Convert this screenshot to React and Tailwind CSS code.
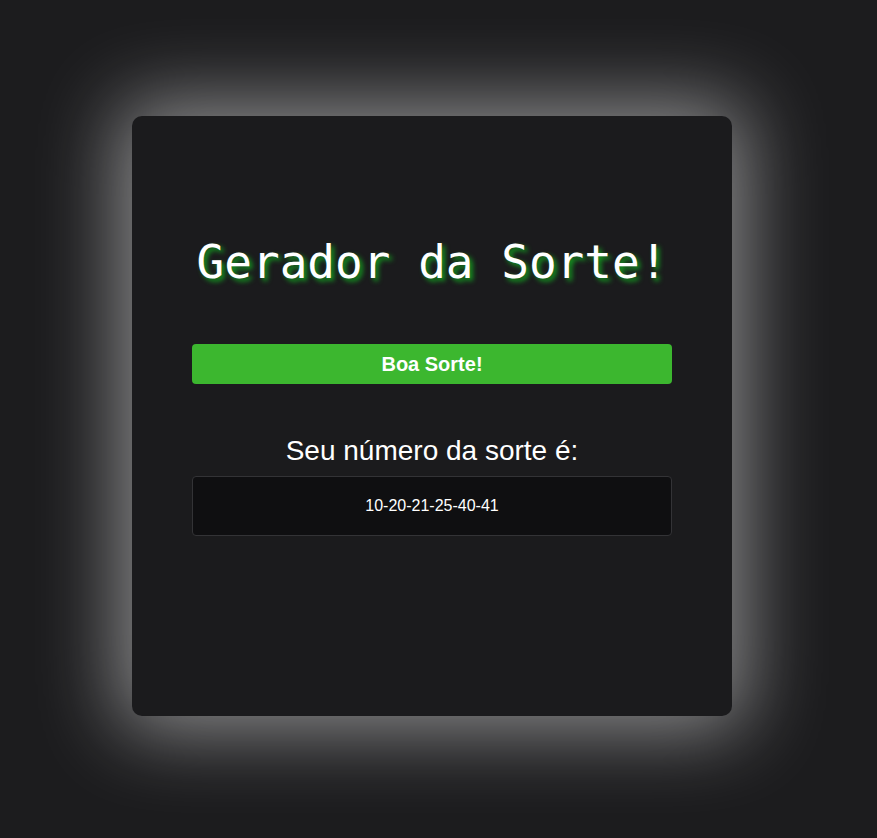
export default function App() {
  return (
    <div className="min-h-screen bg-[#1c1c1e] flex justify-center items-center pr-[13px] pb-[6px] font-['Liberation_Sans',Arial,sans-serif]">
      <div className="w-[600px] h-[600px] bg-[#1b1b1d] rounded-[10px] shadow-[0_0_80px_14px_rgba(255,255,255,0.5)] px-[60px] pt-[119px] flex flex-col items-stretch">
        <h1 className="text-center text-white text-[46px] leading-[54px] font-['DejaVu_Sans_Mono','Liberation_Mono',monospace] [text-shadow:3px_3px_5px_#13a020]">
          Gerador da Sorte!
        </h1>
        <button className="mt-[55px] h-[40px] w-full rounded-[4px] bg-[#3cb72f] text-white font-bold text-[20px]">
          Boa Sorte!
        </button>
        <p className="mt-[51px] text-center text-white text-[28px] leading-[32px]">
          Seu número da sorte é:
        </p>
        <div className="mt-[9px] h-[60px] rounded-[4px] border border-[#333336] bg-[#0f0f11] flex items-center justify-center text-white text-[16px]">
          10-20-21-25-40-41
        </div>
      </div>
    </div>
  );
}
